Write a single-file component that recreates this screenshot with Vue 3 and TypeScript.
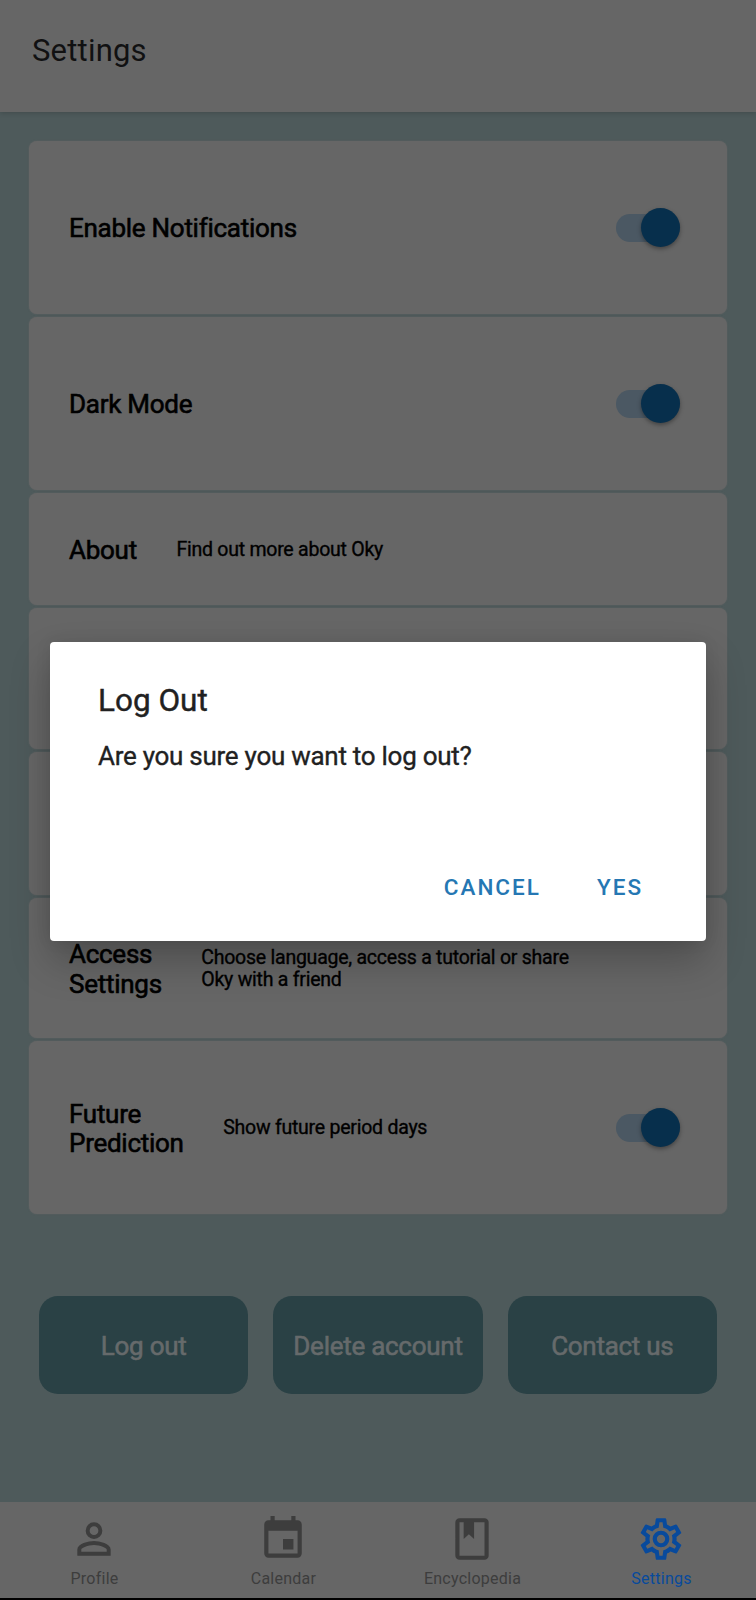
<script setup lang="ts">
interface Row {
  label: string
  note?: string
  toggle?: boolean
  height: number
  kind: string
}

const rows: Row[] = [
  { label: 'Enable Notifications', toggle: true, height: 173, kind: 'notifications' },
  { label: 'Dark Mode', toggle: true, height: 173, kind: 'dark' },
  { label: 'About', note: 'Find out more about Oky', height: 112, kind: 'about' },
  { label: '', height: 141, kind: 'blank' },
  { label: '', height: 143, kind: 'blank' },
  { label: 'Access\nSettings', note: 'Choose language, access a tutorial or share\nOky with a friend', height: 140, kind: 'access' },
  { label: 'Future\nPrediction', note: 'Show future period days', toggle: true, height: 173, kind: 'future' },
]

const actions: string[] = ['Log out', 'Delete account', 'Contact us']

interface Tab {
  name: string
  icon: string
  active?: boolean
}

const tabs: Tab[] = [
  {
    name: 'Profile',
    icon: 'M12,4A4,4 0 0,1 16,8A4,4 0 0,1 12,12A4,4 0 0,1 8,8A4,4 0 0,1 12,4M12,5.9A2.1,2.1 0 0,0 9.9,8A2.1,2.1 0 0,0 12,10.1A2.1,2.1 0 0,0 14.1,8A2.1,2.1 0 0,0 12,5.9M12,13C14.67,13 20,14.33 20,17V20H4V17C4,14.33 9.33,13 12,13M12,14.9C9.03,14.9 5.9,16.36 5.9,17V18.1H18.1V17C18.1,16.36 14.97,14.9 12,14.9Z',
  },
  {
    name: 'Calendar',
    icon: 'M19,19H5V8H19M16,1V3H8V1H6V3H5C3.89,3 3,3.89 3,5V19A2,2 0 0,0 5,21H19A2,2 0 0,0 21,19V5C21,3.89 20.1,3 19,3H18V1M17,12H12V17H17V12Z',
  },
  {
    name: 'Encyclopedia',
    icon: 'M18,2A2,2 0 0,1 20,4V20A2,2 0 0,1 18,22H6A2,2 0 0,1 4,20V4A2,2 0 0,1 6,2H18M18,4H13V12L10.5,9.75L8,12V4H6V20H18V4Z',
  },
  {
    name: 'Settings',
    active: true,
    icon: 'M12,8A4,4 0 0,1 16,12A4,4 0 0,1 12,16A4,4 0 0,1 8,12A4,4 0 0,1 12,8M12,10A2,2 0 0,0 10,12A2,2 0 0,0 12,14A2,2 0 0,0 14,12A2,2 0 0,0 12,10M10,22C9.75,22 9.54,21.82 9.5,21.58L9.13,18.93C8.5,18.68 7.96,18.34 7.44,17.94L4.95,18.95C4.73,19.03 4.46,18.95 4.34,18.73L2.34,15.27C2.21,15.05 2.27,14.78 2.46,14.63L4.57,12.97L4.5,12L4.57,11L2.46,9.37C2.27,9.22 2.21,8.95 2.34,8.73L4.34,5.27C4.46,5.05 4.73,4.96 4.95,5.05L7.44,6.05C7.96,5.66 8.5,5.32 9.13,5.07L9.5,2.42C9.54,2.18 9.75,2 10,2H14C14.25,2 14.46,2.18 14.5,2.42L14.87,5.07C15.5,5.32 16.04,5.66 16.56,6.05L19.05,5.05C19.27,4.96 19.54,5.05 19.66,5.27L21.66,8.73C21.79,8.95 21.73,9.22 21.54,9.37L19.43,11L19.5,12L19.43,13L21.54,14.63C21.73,14.78 21.79,15.05 21.66,15.27L19.66,18.73C19.54,18.95 19.27,19.04 19.05,18.95L16.56,17.95C16.04,18.34 15.5,18.68 14.87,18.93L14.5,21.58C14.46,21.82 14.25,22 14,22H10M11.25,4L10.88,6.61C9.68,6.86 8.62,7.5 7.85,8.39L5.44,7.35L4.69,8.65L6.8,10.2C6.4,11.37 6.4,12.64 6.8,13.8L4.68,15.36L5.43,16.66L7.86,15.62C8.63,16.5 9.68,17.14 10.87,17.38L11.24,20H12.76L13.13,17.39C14.32,17.14 15.37,16.5 16.14,15.62L18.57,16.66L19.32,15.36L17.2,13.81C17.6,12.64 17.6,11.37 17.2,10.2L19.31,8.65L18.56,7.35L16.15,8.39C15.38,7.5 14.32,6.86 13.12,6.62L12.75,4H11.25Z',
  },
]
</script>

<template>
  <div class="screen">
    <header class="header"><h1>Settings</h1></header>

    <main class="content">
      <section class="list">
        <div v-for="(row, i) in rows" :key="i" class="card" :class="row.kind" :style="{ height: row.height + 'px' }">
          <span v-if="row.label" class="label">{{ row.label }}</span>
          <span v-if="row.note" class="note">{{ row.note }}</span>
          <span v-if="row.toggle" class="switch"><span class="thumb"></span></span>
        </div>
      </section>
      <section class="actions">
        <button v-for="a in actions" :key="a" type="button" class="action">{{ a }}</button>
      </section>
    </main>

    <nav class="tabs">
      <a v-for="t in tabs" :key="t.name" class="tab" :class="{ active: t.active }">
        <svg viewBox="0 0 24 24" width="50" height="50" fill="currentColor"><path :d="t.icon" /></svg>
        <span class="tab-name">{{ t.name }}</span>
      </a>
    </nav>
    <div class="edge"></div>

    <div class="overlay">
      <div class="dialog" role="alertdialog">
        <h2>Log Out</h2>
        <p>Are you sure you want to log out?</p>
        <div class="dialog-actions">
          <button type="button" class="cancel">CANCEL</button>
          <button type="button" class="yes">YES</button>
        </div>
      </div>
    </div>
  </div>
</template>

<style>
body {
  margin: 0;
}
</style>

<style scoped>
.screen {
  position: relative;
  display: flex;
  flex-direction: column;
  width: 756px;
  height: 1600px;
  overflow: hidden;
  background: #4e5a5b;
  font-family: Roboto, "Liberation Sans", sans-serif;
}
button {
  border: 0;
  padding: 0;
  background: none;
  font-family: inherit;
}
.header {
  flex: none;
  box-sizing: border-box;
  height: 112px;
  padding: 31px 0 0 32px;
  background: #666;
  box-shadow: 0 1px 5px rgba(0, 0, 0, 0.18);
}
h1 {
  margin: 0;
  font-size: 31px;
  font-weight: 400;
  line-height: 40px;
  letter-spacing: 0.2px;
  color: #111112;
}
.content {
  flex: 1;
  padding: 29px 29px 0;
}
.list {
  display: flex;
  flex-direction: column;
  gap: 3px;
}
.card {
  display: flex;
  align-items: center;
  box-sizing: border-box;
  padding: 0 47px 0 40px;
  border-radius: 8px;
  background: #666;
  box-shadow: 0 0 1.5px #666;
}
.label {
  padding-top: 3px;
  font-size: 26px;
  line-height: 29.5px;
  letter-spacing: -0.27px;
  white-space: pre;
  color: #000;
  -webkit-text-stroke: 0.6px #000;
}
.note {
  padding-top: 2px;
  margin-left: 39.5px;
  font-size: 19.5px;
  line-height: 22.5px;
  letter-spacing: -0.24px;
  white-space: pre;
  color: #000;
  -webkit-text-stroke: 0.35px #000;
}
.switch {
  display: flex;
  justify-content: flex-end;
  align-items: center;
  width: 64px;
  height: 28px;
  margin-left: auto;
  border-radius: 14px;
  background: #4b5863;
}
.thumb {
  width: 39.5px;
  height: 39.5px;
  border-radius: 50%;
  background: #072f4c;
  box-shadow: 0 2px 4px rgba(0, 0, 0, 0.35);
}
.actions {
  display: grid;
  grid-template-columns: repeat(3, 1fr);
  gap: 25px;
  margin-top: 82px;
  padding: 0 10px;
}
.action {
  height: 98px;
  padding-top: 1px;
  border-radius: 19px;
  background: #2a4145;
  font-size: 26px;
  line-height: 30px;
  letter-spacing: -0.27px;
  white-space: nowrap;
  color: #666a6b;
  -webkit-text-stroke: 0.6px #666a6b;
}
.tabs {
  flex: none;
  display: grid;
  grid-template-columns: repeat(4, 1fr);
  box-sizing: border-box;
  height: 96px;
  padding-top: 12px;
  background: #666;
}
.tab {
  display: flex;
  flex-direction: column;
  align-items: center;
  color: #3d3d3d;
}
.tab svg {
  margin-left: -1px;
}
.tab.active {
  color: #084a9c;
}
.tab-name {
  margin-top: 5px;
  font-size: 16px;
  line-height: 20px;
  letter-spacing: 0.25px;
}
.edge {
  flex: none;
  height: 2px;
  background: #000;
}
.overlay {
  position: absolute;
  inset: 0;
  padding: 642px 50px 0;
}
.dialog {
  box-sizing: border-box;
  height: 299px;
  padding: 39px 48px 0;
  border-radius: 4px;
  background: #fff;
  box-shadow: 0 20px 40px rgba(0, 0, 0, 0.24), 0 0 16px rgba(0, 0, 0, 0.08);
}
h2 {
  margin: 0;
  font-size: 31.5px;
  font-weight: 400;
  line-height: 40px;
  color: #212121;
  -webkit-text-stroke: 0.4px #212121;
}
p {
  margin: 19.5px 0 0;
  font-size: 26px;
  line-height: 30px;
  letter-spacing: -0.27px;
  color: #212121;
  -webkit-text-stroke: 0.35px #212121;
}
.dialog-actions {
  display: flex;
  justify-content: flex-end;
  gap: 56px;
  margin-top: 101.5px;
  padding-right: 15px;
}
.dialog-actions button {
  font-size: 22.5px;
  font-weight: 500;
  line-height: 30px;
  letter-spacing: 2px;
  color: #2577b3;
}
</style>
